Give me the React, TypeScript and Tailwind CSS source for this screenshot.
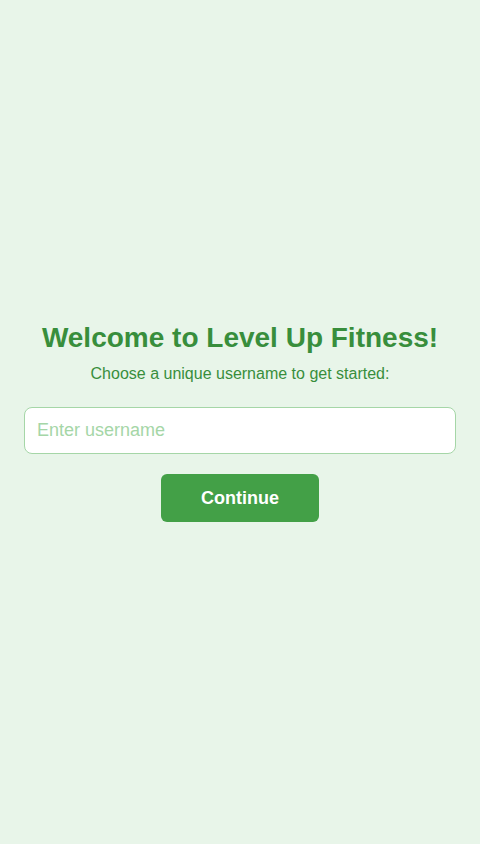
export default function App() {
  return (
    <div className="min-h-screen w-full bg-[#e8f5e9] flex flex-col items-center justify-center px-6 font-['Liberation_Sans',Arial,sans-serif]">
      <h1 className="text-[28px] leading-[32px] font-bold text-[#388e3c] text-center mb-[10px]">
        Welcome to Level Up Fitness!
      </h1>
      <p className="text-base leading-[20px] text-[#388e3c] text-center mb-[23px]">
        Choose a unique username to get started:
      </p>
      <input
        type="text"
        placeholder="Enter username"
        className="w-full h-[47px] px-3 text-lg bg-white border border-[#a5d6a7] rounded-lg outline-none text-[#388e3c] placeholder:text-[#a5d6a7]"
      />
      <button className="mt-5 w-[158px] h-[48px] bg-[#43a047] text-white text-lg font-bold rounded-md">
        Continue
      </button>
    </div>
  )
}
